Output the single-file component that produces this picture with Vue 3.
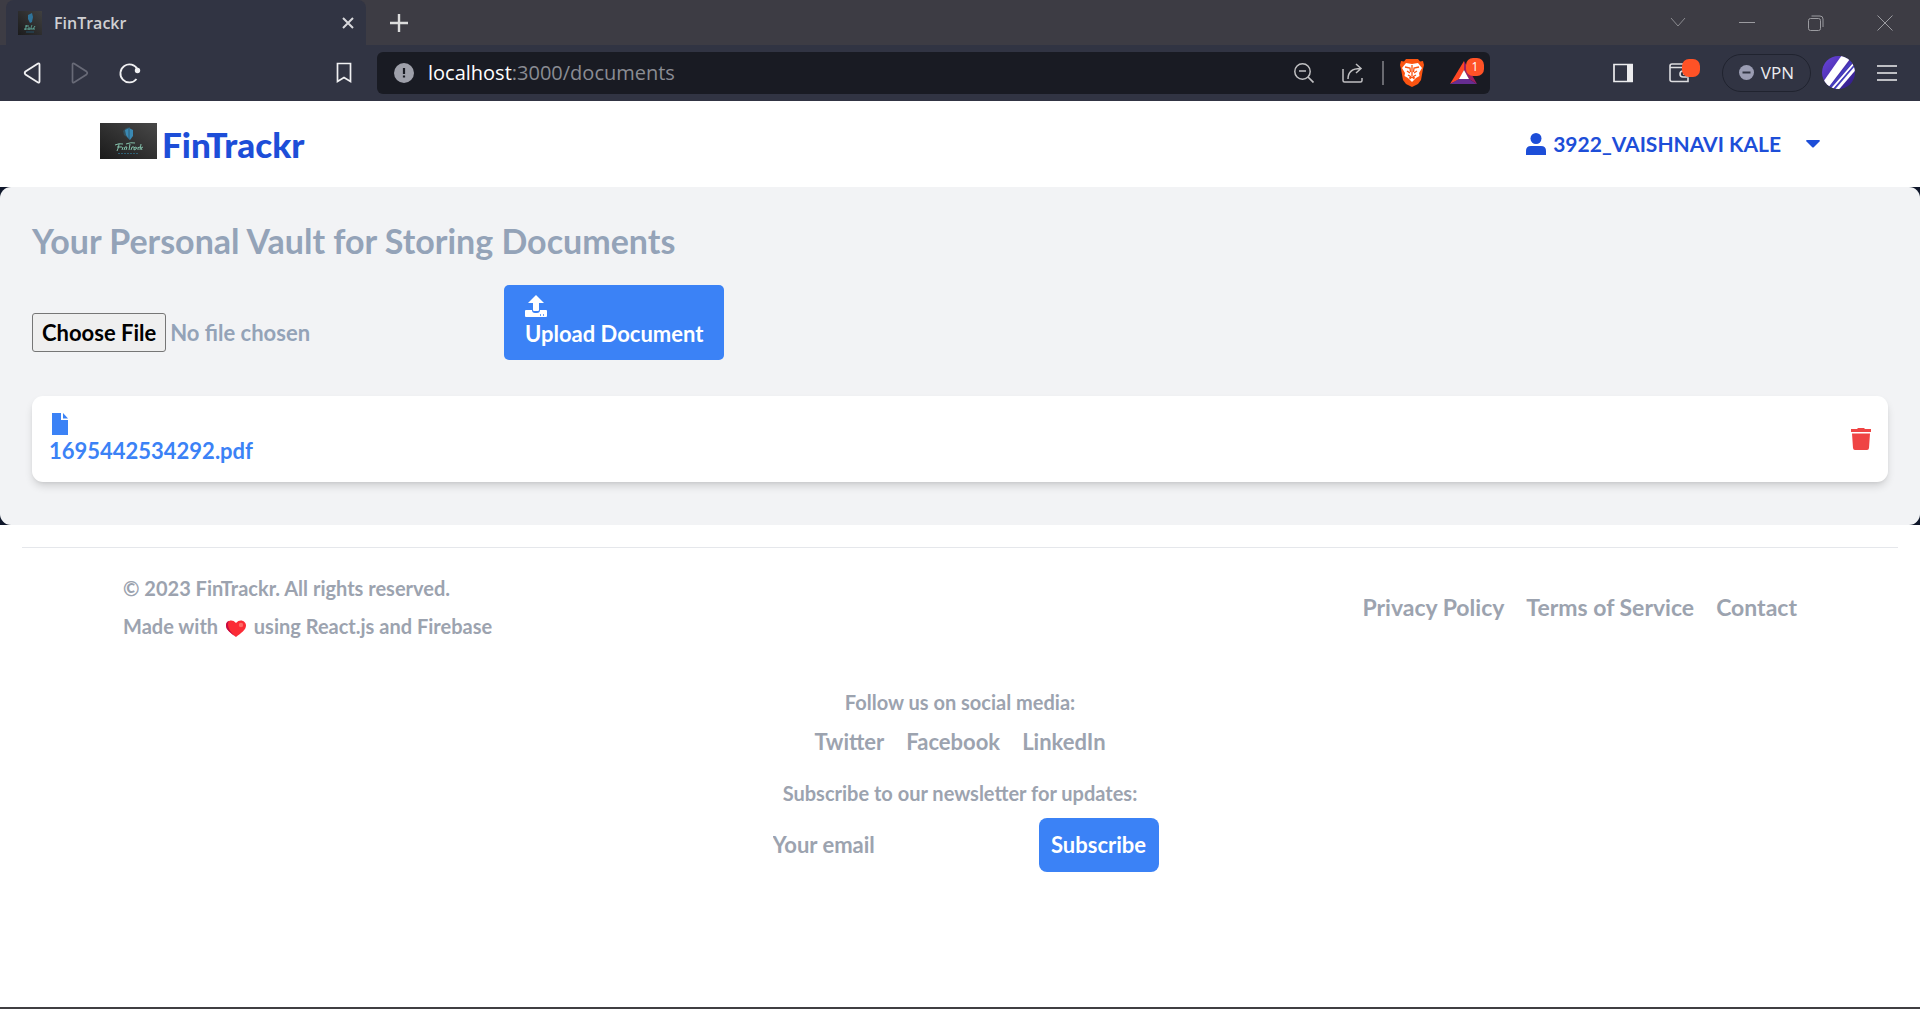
<script setup>
import { ref } from 'vue'

const email = ref('')
const documents = ref(['1695442534292.pdf'])
const legalLinks = ['Privacy Policy', 'Terms of Service', 'Contact']
const socialLinks = ['Twitter', 'Facebook', 'LinkedIn']

function remove(name) {
  documents.value = documents.value.filter((d) => d !== name)
}
</script>

<template>
  <div class="window">
    <header class="chrome">
      <div class="tabs">
        <div class="tab">
          <svg class="favicon" viewBox="0 0 24 24" aria-hidden="true">
            <defs>
              <linearGradient id="fav" x1="0" x2="1" y1="1" y2="0">
                <stop offset="0" stop-color="#1b1b1c" />
                <stop offset="1" stop-color="#404040" />
              </linearGradient>
            </defs>
            <rect width="24" height="24" fill="url(#fav)" />
            <path d="M10 4l4-2 1 4-1 5-2 1-2-4z" fill="#2f7399" />
            <path d="M7 19c1-2 1-4 2-5M7 15h4M11 19v-3M13 18c0-2 1-4 1-4M15 18l2-3M6 18h11" stroke="#5fa394" fill="none" />
            <path d="M8 21h8" stroke="#245068" />
          </svg>
          <span class="tab-title">FinTrackr</span>
          <button class="bare" aria-label="Close tab">
            <svg width="12" height="12" viewBox="0 0 12 12"><path d="M1 1l10 10M11 1L1 11" stroke="#d8d8dc" stroke-width="2" /></svg>
          </button>
        </div>
        <button class="bare new-tab" aria-label="New tab">
          <svg width="18" height="18" viewBox="0 0 18 18"><path d="M9 0v18M0 9h18" stroke="#dcdcdc" stroke-width="2.4" /></svg>
        </button>
        <div class="window-controls">
          <button class="bare" aria-label="Search tabs"><svg width="16" height="16" viewBox="0 0 16 16"><path d="M1 3l7 8 7-8" stroke="#8b8b90" fill="none" /></svg></button>
          <button class="bare" aria-label="Minimize"><svg width="16" height="16" viewBox="0 0 16 16"><path d="M0 7.500h16" stroke="#9b9ba0" /></svg></button>
          <button class="bare" aria-label="Restore"><svg width="16" height="16" viewBox="0 0 16 16"><rect x=".5" y="3.500" width="12" height="12" rx="2" stroke="#9b9ba0" fill="none" /><path d="M3.500 1h8.500q3 0 3 3v8" stroke="#9b9ba0" fill="none" /></svg></button>
          <button class="bare" aria-label="Close window"><svg width="16" height="16" viewBox="0 0 16 16"><path d="M.5.5l15 15M15.500.5l-15 15" stroke="#9b9ba0" /></svg></button>
        </div>
      </div>

      <div class="toolbar">
        <div class="nav-buttons">
          <button class="bare" aria-label="Back"><svg width="18" height="22" viewBox="0 0 18 22"><path d="M15 1.500L2.500 9.500q-1.500 1.500 0 3L15 20.500q1.500.500 1.500-1V2.500q0-1.500-1.500-1z" stroke="#f0f0f2" stroke-width="1.800" fill="none" /></svg></button>
          <button class="bare" aria-label="Forward"><svg width="18" height="22" viewBox="0 0 18 22"><path d="M3 1.500l12.500 8q1.500 1.500 0 3L3 20.500q-1.500.500-1.500-1V2.500q0-1.500 1.500-1z" stroke="#686a77" stroke-width="1.700" fill="none" /></svg></button>
          <button class="bare" aria-label="Reload"><svg width="22" height="22" viewBox="0 0 22 22"><path d="M17.500 17A9 9 0 1 1 18.500 7.500" stroke="#f0f0f2" stroke-width="1.800" fill="none" /><circle cx="18.500" cy="8.500" r="2.700" fill="#f0f0f2" /></svg></button>
        </div>
        <button class="bare bookmark" aria-label="Bookmark this page"><svg width="16" height="22" viewBox="0 0 16 22"><path d="M1.500 1.500h13v18L8 15.500l-6.500 4z" stroke="#f0f0f2" stroke-width="1.700" fill="none" /></svg></button>

        <div class="address">
          <svg width="20" height="20" viewBox="0 0 20 20" aria-hidden="true"><circle cx="10" cy="10" r="10" fill="#9ea0aa" /><path d="M10 5v6M10 12.500v2" stroke="#191b23" stroke-width="2.200" /></svg>
          <span class="url"><b>localhost</b>:3000/documents</span>
          <div class="address-actions">
            <button class="bare" aria-label="Zoom out"><svg width="20" height="20" viewBox="0 0 20 20"><circle cx="8.500" cy="8.500" r="7.700" stroke="#c0c0c2" stroke-width="1.500" fill="none" /><path d="M5 8h7M14 14l5.500 5.500" stroke="#c0c0c2" stroke-width="1.700" /></svg></button>
            <button class="bare" aria-label="Share"><svg width="22" height="20" viewBox="0 0 22 20"><path d="M1 6v11.500q0 1.500 1.500 1.500h16q1.500 0 1.500-1.500V15M6 16C6 9 11 5.500 18.500 5.500M14 1l5 4.500-5 4.500" stroke="#c0c0c2" stroke-width="1.500" fill="none" /></svg></button>
            <i class="separator"></i>
            <button class="bare shields" aria-label="Shields">
              <svg width="24" height="28" viewBox="0 0 24 28">
                <path d="M6 0h12l2 2.500 3-.5 1 4-1 4-2 11-3 4-6 3-6-3-3-4L1 10 0 6l1-4 3 .5z" fill="#fb5411" />
                <path d="M6 4l6 1 6-1 4 5-3 5 .5 3-3.500 2-4 4-4-4-3.500-2 .5-3-3-5z" fill="#fff" />
                <path d="M5 8l5 1 .5 4M19 8l-5 1-.5 4M12 6v11M7 12l3 2M17 12l-3 2M8 16l2.500 1.500-1 1.500M16 16l-2.500 1.500 1 1.500M9.500 20l2.500-2 2.500 2" stroke="#fb5411" stroke-width="1.300" fill="none" />
              </svg>
            </button>
            <button class="bare rewards" aria-label="Rewards">
              <svg width="28" height="24" viewBox="0 0 28 24">
                <path d="M14 0L0 23l10-5 4-9z" fill="#ff4724" />
                <path d="M0 23h27l-8-5H9z" fill="#662d91" />
                <path d="M14 0l13 23-8-5-5-9z" fill="#9e1f63" />
                <path d="M14 9l5 9H9z" fill="#fff" />
              </svg>
              <span class="badge">1</span>
            </button>
          </div>
        </div>

        <div class="extensions">
          <button class="bare" aria-label="Sidebar"><svg width="20" height="20" viewBox="0 0 20 20"><path d="M1 1.500h18v17H1z" stroke="#ececee" stroke-width="1.700" fill="none" /><path d="M14 1h6v18h-6z" fill="#ececee" /></svg></button>
          <button class="bare wallet" aria-label="Wallet">
            <svg width="22" height="20" viewBox="0 0 22 20"><path d="M19 5V1H3Q1 1 1 3v13.500Q1 18.500 3 18.500h16V15M1 4.500h18v4M19 8h-5q-3 0-3 3t3 3h5zM14 11h2" stroke="#dddde0" stroke-width="1.600" fill="none" /></svg>
            <span class="dot"></span>
          </button>
          <button class="vpn"><svg width="15" height="15" viewBox="0 0 15 15"><circle cx="7.500" cy="7.500" r="7.500" fill="#9b9db3" /><path d="M3.500 7.500h8" stroke="#313443" stroke-width="2" /></svg>VPN</button>
          <button class="bare" aria-label="Profile">
            <svg width="33" height="33" viewBox="0 0 33 33">
              <clipPath id="avatar"><circle cx="16.500" cy="16.500" r="16.500" /></clipPath>
              <linearGradient id="violet" x1="0" x2="1" y1="0" y2="1"><stop offset="0" stop-color="#6a45dc" /><stop offset="1" stop-color="#2e1a83" /></linearGradient>
              <g clip-path="url(#avatar)">
                <path d="M0 0h33v33H0z" fill="url(#violet)" />
                <path d="M-1 29L20-1h11L6 32z" fill="#fff" />
                <path d="M6 34L32 3" stroke="#443fc0" stroke-width="2" />
                <path d="M8 35L34 5" stroke="#fff" stroke-width="2" />
                <path d="M10 36L35 7" stroke="#443fc0" stroke-width="2" />
                <path d="M12 37L35 10" stroke="#fff" stroke-width="3" />
              </g>
            </svg>
          </button>
          <button class="bare" aria-label="Menu"><svg width="20" height="16" viewBox="0 0 20 16"><path d="M0 1h20M0 8h20M0 15h20" stroke="#ededf0" stroke-width="1.700" /></svg></button>
        </div>
      </div>
    </header>

    <nav class="navbar">
      <a class="brand" href="#">
        <svg width="57" height="36" viewBox="0 0 57 36" aria-hidden="true">
          <defs><linearGradient id="logo" x1="0" x2="1" y1="1" y2="0"><stop offset="0" stop-color="#1b1b1b" /><stop offset="1" stop-color="#484848" /></linearGradient></defs>
          <rect width="57" height="36" fill="url(#logo)" />
          <path d="M23 8l3-3 4-1v8l-2 3-4-3z" fill="#34505c" />
          <path d="M25 7l4-2 4 2v6l-3 4-2-2-2-3z" fill="#3a89b3" />
          <path d="M29 5v11" stroke="#2d5b74" />
          <path d="M17 28q2-4 2-7M15 22q4-2 8-1M17 24h5M22 27l1-3M24 27l1-3 2 0-1 3M29 27l1-6M26 21q5-2 9-1M31 27l1-3 2 0M36 24q-3 0-2 3l2-1 1-2M40 24q-3 0-2 3M41 21l-1 6M43 24l-2 1 1 2" stroke="#82bfa9" stroke-width="1" fill="none" />
          <path d="M18 30.500h21" stroke="#2f6074" stroke-dasharray="2 1" />
        </svg>
        <span>FinTrackr</span>
      </a>
      <button class="user">
        <svg width="20" height="22" viewBox="0 0 20 22" aria-hidden="true"><circle cx="10" cy="5.500" r="5.500" fill="currentColor" /><path d="M0 22v-4q0-5 5-5h10q5 0 5 5v4z" fill="currentColor" /></svg>
        <span class="user-name">3922_VAISHNAVI KALE</span>
        <svg width="14" height="8" viewBox="0 0 14 8" aria-hidden="true"><path d="M1 0h12q1.500.500.500 1.500L8 7q-1 1-2 0L.5 1.500Q-.5.500 1 0z" fill="currentColor" /></svg>
      </button>
    </nav>

    <div class="backdrop">
      <main class="vault">
        <h1>Your Personal Vault for Storing Documents</h1>
        <form class="upload" @submit.prevent>
          <input type="file" aria-label="Document to upload" />
          <button class="primary upload-button">
            <svg width="22" height="22" viewBox="0 0 22 22" aria-hidden="true"><path d="M11 0l8 8h-5v7q0 1-1 1H9q-1 0-1-1V8H3z" fill="#fff" /><path d="M1 15h6q0 3 3 3h2q3 0 3-3h6q1 0 1 1v5q0 1-1 1H1q-1 0-1-1v-5q0-1 1-1z" fill="#fff" /><path d="M15 20h1M18 20h1" stroke="#3b82f6" stroke-width="1.500" /></svg>
            <span>Upload Document</span>
          </button>
        </form>
        <ul class="documents">
          <li v-for="name in documents" :key="name">
            <a href="#">
              <svg width="22" height="22" viewBox="0 0 22 22" aria-hidden="true"><path d="M3 0h9v7h7v15H3z" fill="currentColor" /><path d="M14 0l5 5.500h-5z" fill="currentColor" /></svg>
              <span>{{ name }}</span>
            </a>
            <button class="bare delete" :aria-label="'Delete ' + name" @click="remove(name)">
              <svg width="20" height="22" viewBox="0 0 20 22"><path d="M6 1l1-1h6l1 1h6v3H0V1zM1 5.500h18L18 20q-.2 2-2 2H4q-1.800 0-2-2z" fill="currentColor" /></svg>
            </button>
          </li>
        </ul>
      </main>
    </div>

    <footer class="footer">
      <div class="footer-top">
        <div class="legal">
          <p>© 2023 FinTrackr. All rights reserved.</p>
          <p>
            Made with
            <svg class="heart" width="20" height="17" viewBox="0 0 20 17" role="img" aria-label="love"><path d="M10 17C5 13 0 10 0 5.500 0 1 6-2 10 3c4-5 10-2 10 2.500C20 10 15 13 10 17z" fill="#fb2c36" /><path d="M10 17C5 13 0 10 0 5.500Q0 2 3 .8C0 6 4 12 10 17z" fill="#c60b43" /><circle cx="15" cy="5" r="2.200" fill="#ff6a66" /></svg>
            using React.js and Firebase
          </p>
        </div>
        <div class="links legal-links"><a v-for="l in legalLinks" :key="l" href="#">{{ l }}</a></div>
      </div>
      <div class="social">
        <p>Follow us on social media:</p>
        <div class="links"><a v-for="l in socialLinks" :key="l" href="#">{{ l }}</a></div>
      </div>
      <form class="newsletter" @submit.prevent>
        <label for="email">Subscribe to our newsletter for updates:</label>
        <div class="subscribe-row">
          <input id="email" v-model="email" type="email" placeholder="Your email" />
          <button class="primary subscribe">Subscribe</button>
        </div>
      </form>
    </footer>
  </div>
</template>

<style>
body {
  margin: 0;
  background: #fff;
}
</style>

<style scoped>
* {
  box-sizing: border-box;
}
.window {
  display: flex;
  flex-direction: column;
  min-height: 100vh;
  border-bottom: 2px solid #403f42;
  background: #fff;
  color: #9ca3af;
  font: 700 22px/28px Lato, "Open Sans", sans-serif;
}
button,
input {
  font: inherit;
}
button {
  cursor: pointer;
}
svg {
  display: block;
  flex: none;
}
a {
  color: inherit;
  text-decoration: none;
}
p,
h1,
ul {
  margin: 0;
  padding: 0;
}
.bare {
  display: flex;
  padding: 0;
  border: 0;
  background: none;
}

/* Browser frame */
.chrome {
  background: #313443;
  font: 400 20px/28px "Open Sans", "Noto Sans", sans-serif;
}
.tabs {
  display: flex;
  align-items: center;
  height: 45px;
  padding-left: 6px;
  background: #3d3c44;
}
.tab {
  display: flex;
  align-items: center;
  width: 360px;
  height: 45px;
  padding: 0 12px;
  border-radius: 8px 8px 0 0;
  background: #313443;
}
.favicon {
  width: 24px;
  height: 24px;
}
.tab-title {
  flex: 1;
  margin-left: 12px;
  color: #d0d0d3;
  font-size: 16px;
  font-weight: 600;
}
.new-tab {
  margin-left: 24px;
}
.window-controls {
  display: flex;
  gap: 53px;
  margin-left: auto;
  padding-right: 27px;
}
.toolbar {
  display: flex;
  align-items: center;
  height: 56px;
  padding: 0 23px 1px;
}
.nav-buttons {
  display: flex;
  gap: 30px;
}
.bookmark {
  margin-left: 195px;
}
.address {
  display: flex;
  flex: 1;
  align-items: center;
  height: 42px;
  margin-left: 25px;
  padding: 0 6px 0 17px;
  border-radius: 6px;
  background: #191b23;
}
.url {
  margin-left: 14px;
  color: #8a8c93;
}
.url b {
  color: #fff;
  font-weight: 400;
}
.address-actions {
  display: flex;
  align-items: center;
  gap: 28px;
  margin-left: auto;
}
.separator {
  width: 2px;
  height: 24px;
  margin: 0 -10px;
  background: #696a70;
}
.shields {
  margin-left: -2px;
}
.rewards,
.wallet {
  position: relative;
}
.rewards {
  margin-left: -2px;
  padding-right: 6px;
}
.badge {
  position: absolute;
  top: -3px;
  right: 0;
  width: 18px;
  height: 18px;
  border-radius: 7px;
  background: #ff5226;
  color: #fff;
  font-size: 12px;
  line-height: 18px;
}
.extensions {
  display: flex;
  align-items: center;
  gap: 22px;
  margin-left: 123px;
}
.wallet {
  margin: 0 9px 0 14px;
}
.dot {
  position: absolute;
  top: -4px;
  right: -9px;
  width: 18px;
  height: 18px;
  border-radius: 7px;
  background: #ff5226;
}
.vpn {
  display: flex;
  align-items: center;
  gap: 7px;
  height: 38px;
  margin-right: -11px;
  padding: 0 16px;
  border: 1px solid #20232f;
  border-radius: 19px;
  background: none;
  color: #ececf0;
  font-size: 17px;
}

/* Application */
.navbar {
  display: flex;
  align-items: center;
  justify-content: space-between;
  height: 86px;
  padding: 0 100px;
  color: #1d4ed8;
}
.brand {
  display: flex;
  align-items: center;
  gap: 5px;
  font-size: 35px;
  font-weight: 900;
}
.brand svg {
  margin-bottom: 6px;
}
.user {
  display: flex;
  align-items: center;
  padding: 0;
  border: 0;
  background: none;
  color: inherit;
}
.user-name {
  margin: 0 25px 0 7px;
  font-size: 21px;
}
.backdrop {
  background: #0f172a;
}
.vault {
  padding: 32px 32px 43px;
  border-radius: 11px;
  background: #f2f3f5;
  color: #94a3b8;
}
h1 {
  margin-bottom: 22px;
  font-size: 34px;
  font-weight: 700;
  line-height: 44px;
}
.upload {
  display: flex;
  align-items: center;
  margin-bottom: 36px;
}
.upload input {
  width: 472px;
  padding-top: 20px;
}
.upload input::file-selector-button {
  height: 39px;
  padding: 0 9px;
  border: 1px solid #767676;
  border-radius: 3px;
  background: #efefef;
  color: #000;
  font: inherit;
}
.primary {
  border: 0;
  background: #3b82f6;
  color: #fff;
}
.upload-button {
  display: flex;
  flex-direction: column;
  gap: 3px;
  height: 75px;
  padding: 10px 21px;
  border-radius: 5px;
}
.documents {
  list-style: none;
}
.documents li {
  display: flex;
  align-items: center;
  justify-content: space-between;
  height: 86px;
  padding: 0 17px;
  border-radius: 11px;
  background: #fff;
  box-shadow: 0 5px 8px -1px rgba(0, 0, 0, 0.14), 0 2px 4px -2px rgba(0, 0, 0, 0.1);
}
.documents a {
  display: grid;
  gap: 2px;
  color: #3b82f6;
}
.delete {
  color: #ef4444;
}

/* Footer */
.footer {
  display: flex;
  flex-direction: column;
  margin: 22px 22px 0;
  border-top: 1px solid #e5e7eb;
}
.footer p,
.footer label {
  font-size: 20px;
}
.footer-top {
  display: flex;
  align-items: center;
  justify-content: space-between;
  padding: 26px 101px 0;
}
.legal {
  display: grid;
  gap: 10px;
}
.heart {
  display: inline-block;
  margin: 0 3px;
  vertical-align: -3px;
}
.links {
  display: flex;
  gap: 22px;
}
.legal-links {
  font-size: 23px;
}
.social {
  display: grid;
  gap: 12px;
  justify-items: center;
  margin-top: 48px;
}
.newsletter {
  display: grid;
  gap: 11px;
  justify-items: center;
  margin-top: 23px;
}
.subscribe-row {
  display: flex;
}
.newsletter input {
  width: 277px;
  padding: 0 11px;
  border: 0;
  background: none;
  outline: 0;
}
.newsletter input::placeholder {
  color: #9ca3af;
}
.subscribe {
  width: 120px;
  height: 54px;
  padding: 0;
  border-radius: 8px;
}
</style>
